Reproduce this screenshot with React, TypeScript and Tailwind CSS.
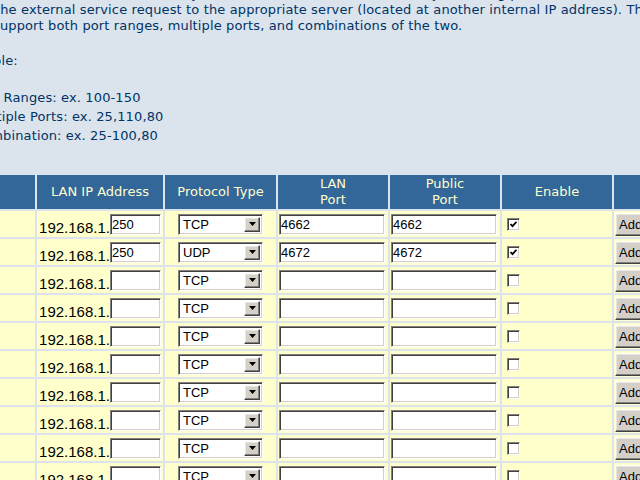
const rows = [
  { ip: "250", proto: "TCP", lan: "4662", pub: "4662", on: true },
  { ip: "250", proto: "UDP", lan: "4672", pub: "4672", on: true },
  ...Array.from({ length: 10 }, () => ({ ip: "", proto: "TCP", lan: "", pub: "", on: false })),
];

// classic win98-ish sunken / raised edges
const sunken =
  "border border-t-[#808080] border-l-[#808080] border-b-white border-r-white shadow-[inset_1px_1px_0_#404040,inset_-1px_-1px_0_#d4d0c8]";
const raised =
  "border border-t-white border-l-white border-b-[#404040] border-r-[#404040] shadow-[inset_-1px_-1px_0_#808080,inset_1px_1px_0_#e8e6e0]";
const arial = "font-['Liberation_Sans',Arial,sans-serif]";

function Field({ value, w }: { value: string; w: string }) {
  return (
    <input
      value={value}
      readOnly
      className={`${sunken} ${arial} ${w} h-[21px] bg-white px-px text-[13px] text-black outline-none`}
    />
  );
}

function Proto({ value }: { value: string }) {
  return (
    <div className={`${sunken} ${arial} mx-auto flex h-[21px] w-[85px] items-center bg-white p-[2px] text-[13px] text-black`}>
      <span className="flex-1 pl-[2px] leading-none">{value}</span>
      <span className={`${raised} flex h-full w-[16px] items-center justify-center bg-[#d4d0c8]`}>
        <svg width="7" height="4" viewBox="0 0 7 4">
          <path d="M0 0h7L3.5 4z" fill="#000" />
        </svg>
      </span>
    </div>
  );
}

function Check({ on }: { on: boolean }) {
  return (
    <span className={`${sunken} flex h-[13px] w-[13px] items-center justify-center bg-white`}>
      {on && (
        <svg width="7" height="7" viewBox="0 0 7 7">
          <path d="M0.5 3L2.5 5.2L6.5 0.8" fill="none" stroke="#000" strokeWidth="1.8" />
        </svg>
      )}
    </span>
  );
}

export default function App() {
  const th = "h-[34px] bg-[#336699] p-0 text-center align-middle text-[13px] font-normal leading-[16px] text-[#ffffcc]";
  const td = "h-[26px] bg-[#ffffcc] p-0 align-middle";

  return (
    <div className="h-[480px] w-[640px] overflow-hidden bg-[#dbe3ec] font-['DejaVu_Sans',Verdana,sans-serif]">
      {/* page is scrolled: first line and left edge are cut */}
      <div className="-mt-[14px] whitespace-nowrap text-[13px] leading-[16px] tracking-[0.13px] text-[#003366]">
        <div className="-ml-[44px]">
          lets remote users reach servers on your LAN. The router will forward any matching packets of
        </div>
        <div className="-ml-[5px]">
          the external service request to the appropriate server (located at another internal IP address). The
        </div>
        <div className="-ml-[7px]">support both port ranges, multiple ports, and combinations of the two.</div>
        <div className="-ml-[44px] mt-[19px]">Example:</div>
        <div className="-ml-[27px] mt-[19px] leading-[19px]">
          <div>Port Ranges: ex. 100-150</div>
          <div>Multiple Ports: ex. 25,110,80</div>
          <div>Combination: ex. 25-100,80</div>
        </div>
      </div>

      <table className="-ml-[67px] mt-[28px] w-[763px] table-fixed border-separate border-spacing-[2px]">
        <thead>
          <tr>
            <th className={`${th} w-[100px]`}></th>
            <th className={`${th} w-[126px]`}>LAN IP Address</th>
            <th className={`${th} w-[111px]`}>Protocol Type</th>
            <th className={`${th} w-[110px]`}>
              LAN
              <br />
              Port
            </th>
            <th className={`${th} w-[110px]`}>
              Public
              <br />
              Port
            </th>
            <th className={`${th} w-[110px]`}>Enable</th>
            <th className={`${th} w-[80px]`}></th>
          </tr>
        </thead>
        <tbody>
          {rows.map((r, i) => (
            <tr key={i}>
              <td className={td}></td>
              <td className={td}>
                <div className="flex items-center justify-center">
                  <span className={`${arial} pt-[7px] text-[15px] leading-none text-black`}>192.168.1.</span>
                  <Field value={r.ip} w="w-[51px]" />
                </div>
              </td>
              <td className={td}>
                <Proto value={r.proto} />
              </td>
              <td className={`${td} pl-px`}>
                <Field value={r.lan} w="w-[106px]" />
              </td>
              <td className={`${td} pl-px`}>
                <Field value={r.pub} w="w-[106px]" />
              </td>
              <td className={`${td} pl-[5px]`}>
                <Check on={r.on} />
              </td>
              <td className={`${td} pl-px`}>
                <button className={`${raised} ${arial} h-[23px] bg-[#d4d0c8] px-[3px] text-[13px] text-black`}>
                  Add
                </button>
              </td>
            </tr>
          ))}
        </tbody>
      </table>
    </div>
  );
}
